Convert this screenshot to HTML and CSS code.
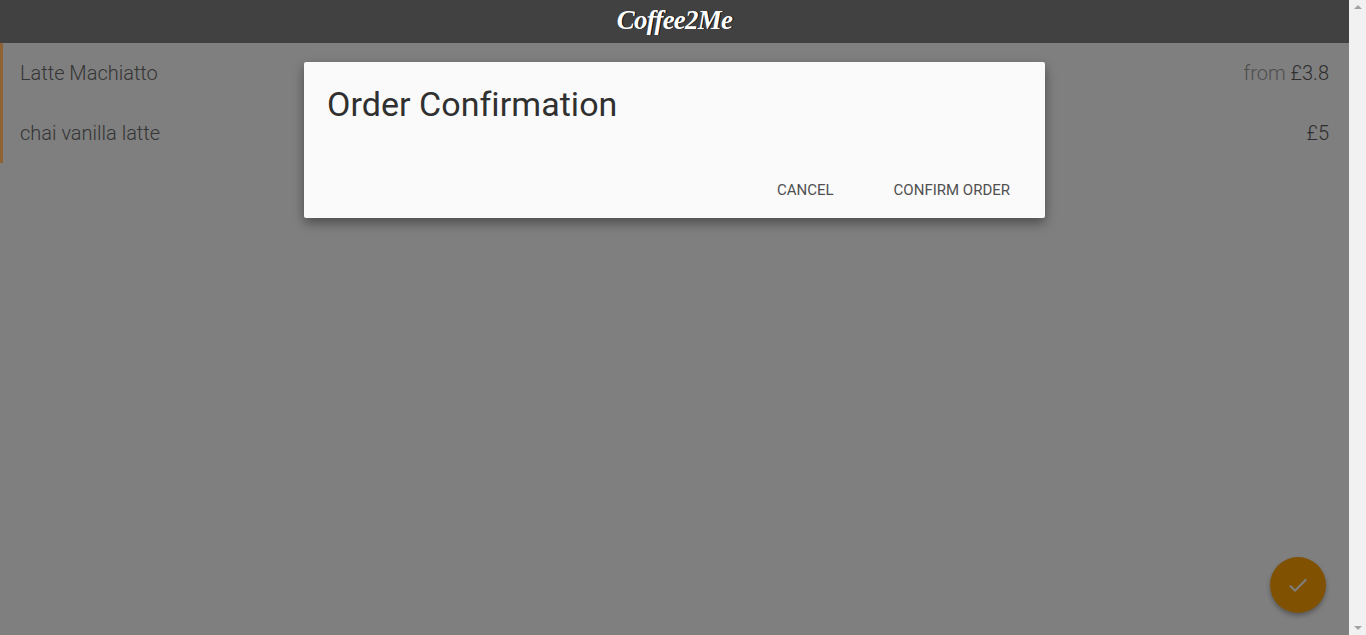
FILE: index.html
```html
<!DOCTYPE html>
<html lang="en">
<head>
    <meta charset="UTF-8">
    <meta name="viewport" content="width=device-width, initial-scale=1.0">
    <title>Coffee2Me</title>
    <link rel="stylesheet" href="styles.css">
</head>
<body>
    <div class="app">
        <div class="page">
            <header class="app-header">
                <span class="logo">Coffee2Me</span>
            </header>

            <ul class="drink-list">
                <li class="drink-row">
                    <span class="drink-name">Latte Machiatto</span>
                    <span class="drink-price"><span class="price-from">from</span> £3.8</span>
                </li>
                <li class="drink-row">
                    <span class="drink-name">chai vanilla latte</span>
                    <span class="drink-price">£5</span>
                </li>
            </ul>

            <button class="fab" aria-label="Confirm">
                <svg viewBox="0 0 24 24" width="24" height="24"><path d="M9 16.17 4.83 12l-1.42 1.41L9 19 21 7l-1.41-1.41z" fill="currentColor"/></svg>
            </button>

            <div class="overlay">
                <div class="dialog">
                    <h2 class="dialog-title">Order Confirmation</h2>
                    <div class="dialog-actions">
                        <button class="dialog-button">Cancel</button>
                        <button class="dialog-button">Confirm Order</button>
                    </div>
                </div>
            </div>
        </div>

        <div class="scrollbar">
            <span class="arrow-up"></span>
            <span class="arrow-down"></span>
        </div>
    </div>
</body>
</html>
```

FILE: styles.css
```css
:root {
    --page-bg: #fff;
    --dialog-bg: #fafafa;
    --accent: #ffa200;
}

html, body {
    height: 100%;
}

body {
    margin: 0;
    font-family: Roboto, sans-serif;
    background: var(--page-bg);
    color: #6b6b6b;
    overflow: hidden;
}

.app {
    display: flex;
    height: 100%;
}

.page {
    position: relative;
    flex: 1;
    min-width: 0;
}

.app-header {
    height: 43px;
    background: #828282;
    display: flex;
    justify-content: center;
    align-items: center;
}

/* logo and row accent sit above the dialog overlay */
.logo {
    position: relative;
    z-index: 2;
    top: -1px;
    font-family: "Liberation Serif", serif;
    font-style: italic;
    font-weight: 700;
    font-size: 27px;
    letter-spacing: -0.8px;
    color: #fff;
    text-shadow: 1px 0 0 #000;
}

.drink-list {
    list-style: none;
    margin: 0;
    padding: 0;
}

.drink-row {
    position: relative;
    height: 60px;
    box-sizing: border-box;
    display: flex;
    justify-content: space-between;
    align-items: center;
    padding: 0 20px;
    font-size: 20px;
    font-weight: 300;
}

.drink-row::before {
    content: "";
    position: absolute;
    left: 0;
    top: 0;
    bottom: 0;
    width: 3px;
    z-index: 2;
    background: #8f6236;
}

.drink-price {
    color: #5c5c5c;
}

.price-from {
    color: #9e9e9e;
}

.fab {
    position: absolute;
    right: 23px;
    bottom: 22px;
    width: 56px;
    height: 56px;
    border: none;
    border-radius: 50%;
    background: var(--accent);
    color: #fff;
    display: flex;
    align-items: center;
    justify-content: center;
    box-shadow: 0 3px 5px rgba(0,0,0,0.3);
}

.overlay {
    position: absolute;
    inset: 0;
    background: rgba(0,0,0,0.5);
    display: flex;
    justify-content: center;
    align-items: flex-start;
}

.dialog {
    width: 741px;
    height: 156px;
    margin-top: 62px;
    box-sizing: border-box;
    background: var(--dialog-bg);
    border-radius: 2px;
    box-shadow: 0 5px 12px rgba(0,0,0,0.4);
    display: flex;
    flex-direction: column;
    justify-content: space-between;
}

.dialog-title {
    margin: 0;
    padding: 23px 23px 0;
    font-size: 34px;
    line-height: 38px;
    font-weight: 400;
    letter-spacing: 0.05px;
    color: #303030;
}

.dialog-actions {
    display: flex;
    justify-content: flex-end;
    gap: 8px;
    padding: 0 9px 8px 0;
}

.dialog-button {
    height: 40px;
    padding: 0 26px;
    border: none;
    background: none;
    font-family: inherit;
    font-size: 15px;
    color: #505050;
    text-transform: uppercase;
}

.scrollbar {
    width: 17px;
    background: #f1f1f1;
    display: flex;
    flex-direction: column;
    justify-content: space-between;
    align-items: center;
    padding: 5px 0;
    box-sizing: border-box;
}

.arrow-up, .arrow-down {
    width: 0;
    height: 0;
    border-left: 4px solid transparent;
    border-right: 4px solid transparent;
}

.arrow-up {
    border-bottom: 4px solid #a3a3a3;
}

.arrow-down {
    border-top: 4px solid #a3a3a3;
}
```
